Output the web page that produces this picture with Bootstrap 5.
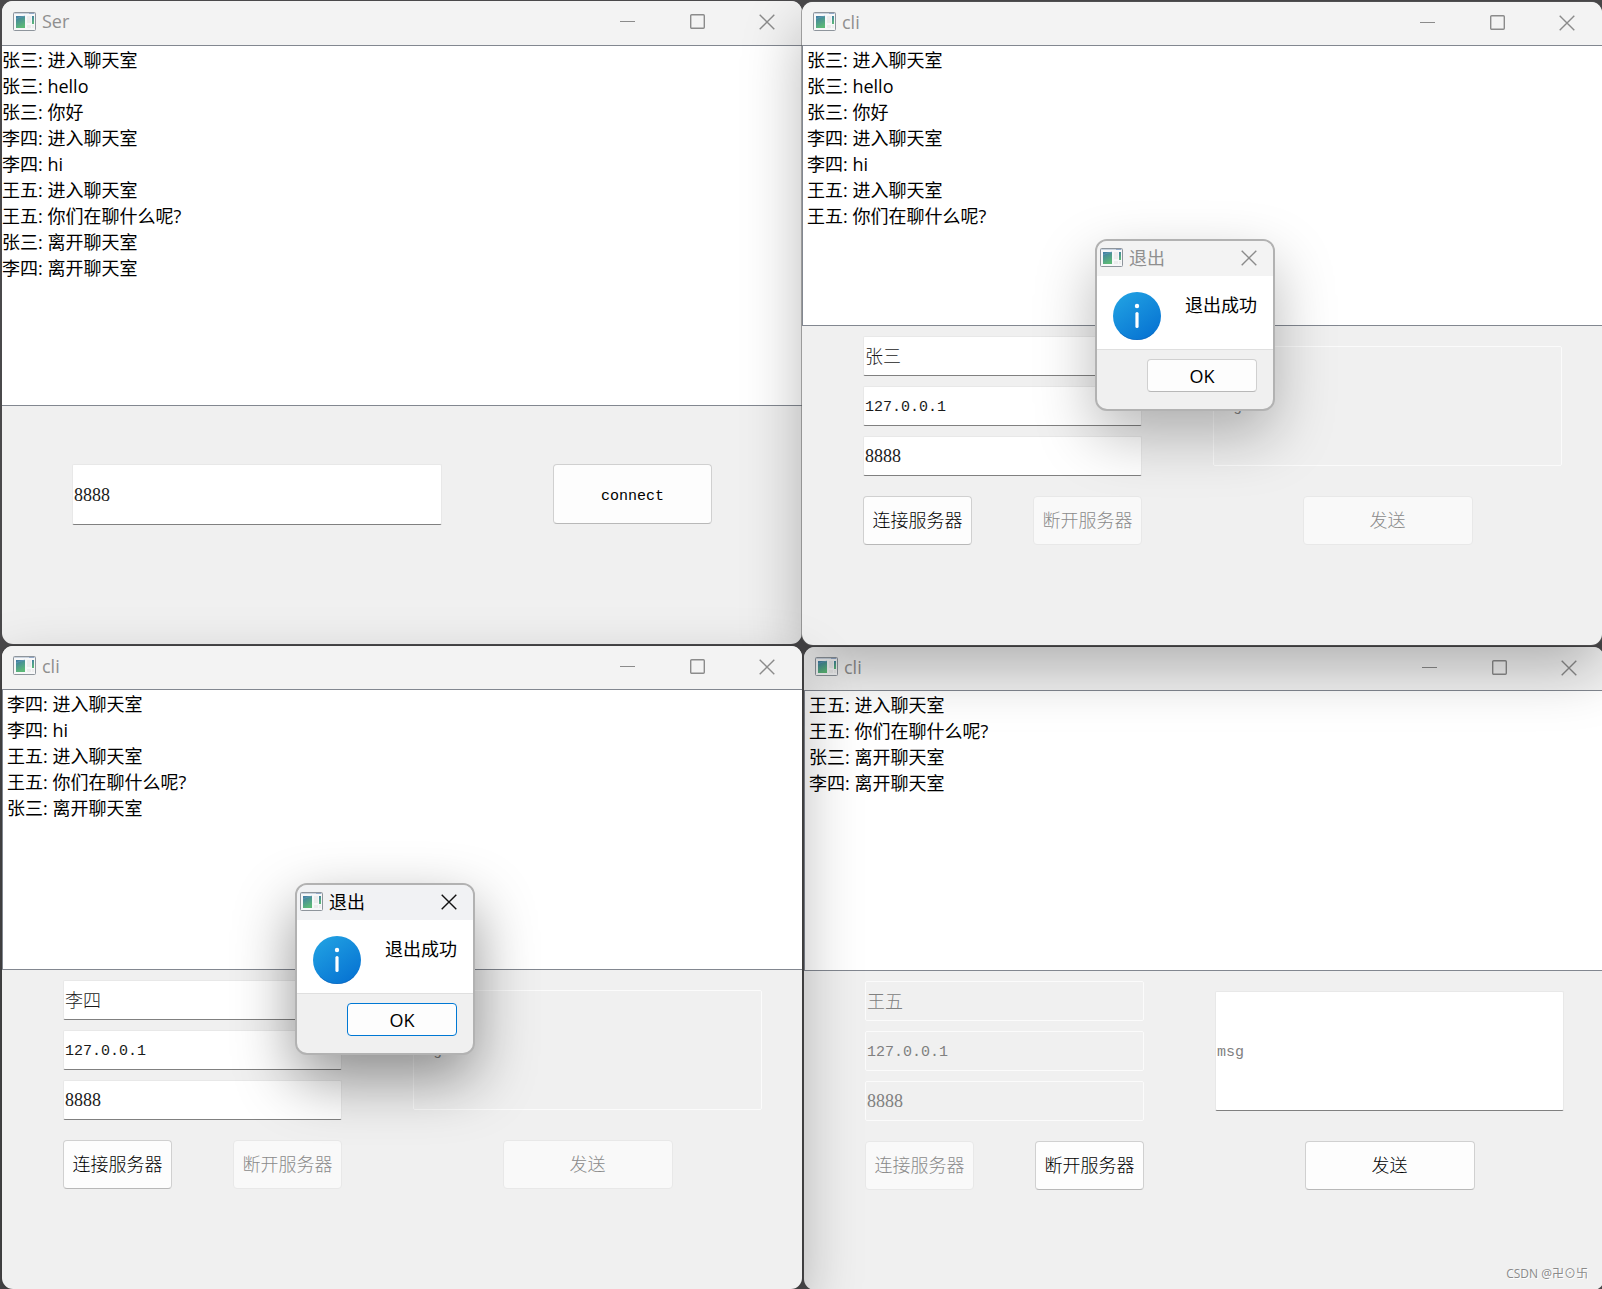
<!DOCTYPE html>
<html lang="zh-CN">
<head>
<meta charset="utf-8">
<meta name="viewport" content="width=device-width, initial-scale=1">
<title>Ser / cli</title>
<link href="https://cdn.jsdelivr.net/npm/bootstrap@5.3.0/dist/css/bootstrap.min.css" rel="stylesheet">
<style>
  body {
    background: #4a494b;
    color: #000;
    font-family: "Open Sans", "Noto Sans CJK SC", sans-serif;
    font-size: 18px;
    line-height: 26px;
  }
  .desktop {
    display: grid;
    grid-template-columns: 1fr 1fr;
    grid-template-rows: 1fr 1fr;
    row-gap: 2px;
    min-height: 100vh;
    padding: 1px 0 0 2px;
    overflow: hidden;
  }
  .win {
    position: relative;
    display: flex;
    flex-direction: column;
    background: #f0f0f0;
    border-radius: 11px;
  }
  .win-server { z-index: 2; }
  .win-first { z-index: 3; margin: 1px 0 -1px; box-shadow: 0 0 0 1px rgba(90, 90, 90, .5), 0 24px 60px rgba(0, 0, 0, .28); }
  .win-second { z-index: 4; box-shadow: 0 0 0 1px rgba(60, 60, 60, .6), 0 24px 60px rgba(0, 0, 0, .28); }
  .win-third { z-index: 1; margin: 1px -2px -1px 2px; }

  .titlebar { height: 43px; padding-left: 11px; background: #f3f3f3; color: #8f8f8f; border-radius: 11px 11px 0 0; }
  .win-server .titlebar { height: 44px; }
  .title-label { gap: 6px; }
  .caption-btn { width: 70px; height: 41px; border: 0; padding: 0; background: transparent; color: #8b8b8b; display: flex; align-items: center; justify-content: center; }

  .chat-log { flex: 1 0 280px; border: 1px solid #828790; border-right: 0; background: #fff; padding: 1px 4px 0; }
  .win-server .chat-log { border-left: 0; padding-left: 0; }

  .server-panel { padding: 58px 90px 119px 70px; gap: 111px; }
  .server-panel .field { flex: 7 1 0; height: 61px; }
  .server-panel .push { flex: 3 1 0; height: 60px; }

  .client-panel { display: grid; grid-template-columns: 4fr 5fr; column-gap: 71px; padding: 10px 40px 100px 61px; }
  .client-panel .field { height: 40px; }
  .client-panel .field-msg { height: 120px; }
  .client-panel .push { height: 49px; }
  .login-column { gap: 10px; }
  .send-column { padding-top: 10px; }
  .push-pair { display: flex; justify-content: space-between; margin-top: 10px; }
  .push-pair .push { width: 109px; }
  .push-send { width: 170px; }

  .field {
    width: 100%;
    min-width: 0;
    border: 1px solid #e8e8e8;
    border-bottom-color: #808080;
    border-radius: 2px;
    background: #fff;
    color: #1a1a1a;
    padding: 3px 1px 0;
    font-family: "Liberation Mono", "Noto Sans CJK SC", monospace;
    font-size: 15px;
  }
  .field-name { font-size: 18px; font-weight: 300; padding: 0 1px 3px; }
  .field-port { font-family: "Liberation Serif", serif; font-size: 18px; padding-top: 1px; }
  .field::placeholder { color: #808080; opacity: 1; }
  .field:disabled { background: transparent; border-color: #fbfbfb; color: #808080; }
  .push {
    border: 1px solid #d0d0d0;
    border-bottom-color: #b8b8b8;
    border-radius: 4px;
    background: #fdfdfd;
    color: #000;
    padding: 3px 0 0;
    font-family: "Liberation Mono", "Noto Sans CJK SC", monospace;
    font-size: 18px;
    font-weight: 300;
    white-space: nowrap;
  }
  .push-latin { font-size: 15px; font-weight: 400; padding-top: 5px; }
  .push:disabled { background: #f9f9f9; border-color: #e8e8e8; color: #8a8a8a; }

  .msgbox {
    position: absolute;
    z-index: 5;
    top: 237px;
    left: calc(50% - 107px);
    width: 180px;
    border: 2px solid #b2b2b2;
    border-radius: 12px;
    background: #f0f0f0;
    box-shadow: 0 24px 60px rgba(0, 0, 0, .28);
  }
  .msgbox-active { box-shadow: 0 24px 60px rgba(0, 0, 0, .42); }
  .msgbox-title { height: 35px; padding: 0 0 2px 3px; background: #f3f3f3; color: #8f8f8f; border-radius: 10px 10px 0 0; }
  .msgbox-title .title-label { margin-right: auto; }
  .msgbox-title .caption-btn { width: 48px; height: 33px; }
  .msgbox-active .msgbox-title { background: #f1f2f4; color: #000; }
  .msgbox-active .caption-btn { color: #111; }
  .msgbox-body { height: 74px; padding: 16px 16px 0; background: #fff; border-bottom: 1px solid #dfdfdf; }
  .msgbox-foot { padding: 9px 16px 17px; }
  .msgbox-foot .push { width: 110px; height: 33px; padding: 0; font-family: "Open Sans", sans-serif; font-weight: 400; line-height: 24px; }
  .msgbox-active .push { border-color: #0078d4; }

  .watermark { position: absolute; z-index: 6; right: 16px; bottom: 4px; color: #8a8a8a; font-size: 12px; line-height: 24px; text-shadow: 1px 1px 0 #fff; }
</style>
<script src="https://cdn.jsdelivr.net/npm/bootstrap@5.3.0/dist/js/bootstrap.bundle.min.js"></script>
</head>
<body>

<svg width="0" height="0" class="position-absolute" aria-hidden="true">
  <defs>
    <linearGradient id="paneFill" x1="0" y1="0" x2=".4" y2="1">
      <stop offset="0" stop-color="#3f7ba6"/><stop offset="1" stop-color="#5cb878"/>
    </linearGradient>
    <linearGradient id="infoFill" x1=".1" y1="0" x2=".8" y2="1">
      <stop offset="0" stop-color="#22a3e3"/><stop offset="1" stop-color="#0672d2"/>
    </linearGradient>
  </defs>
  <symbol id="appIcon" viewBox="0 0 23 19">
    <rect x=".5" y=".5" width="22" height="18" rx="1" fill="#f7f8f9" stroke="#8e959c"/>
    <path d="M1 1.500h21" stroke="#c9d3df"/>
    <path d="M16 1.500h5" stroke="#93a9c8"/>
    <rect x="3" y="4" width="9" height="12" fill="url(#paneFill)"/>
    <path d="M3 7c3-2 6-2 9-3" stroke="#6d9bc4" fill="none" opacity=".6"/>
    <rect x="14" y="4" width="4" height="7" fill="#ececed"/>
    <rect x="14" y="13" width="4" height="3" fill="#ececed"/>
    <rect x="19" y="4" width="2" height="8" fill="url(#paneFill)"/>
    <rect x="19" y="13" width="2" height="3" fill="#eeeeee"/>
  </symbol>
  <symbol id="minIcon" viewBox="0 0 15 15"><path d="M0 7.500h15" stroke="currentColor" fill="none"/></symbol>
  <symbol id="maxIcon" viewBox="0 0 15 15"><rect x=".7" y=".7" width="13.600" height="13.600" rx="1" stroke="currentColor" stroke-width="1.400" fill="none"/></symbol>
  <symbol id="closeIcon" viewBox="0 0 16 16"><path d="M.7.7l14.600 14.600M15.300.7L.7 15.300" stroke="currentColor" stroke-width="1.400" fill="none"/></symbol>
  <symbol id="infoIcon" viewBox="0 0 48 48">
    <circle cx="24" cy="24" r="24" fill="url(#infoFill)"/>
    <path d="M7 40.500A23.500 23.500 0 0 0 41 40.500" stroke="#075fb8" fill="none" opacity=".6"/>
    <circle cx="24" cy="14" r="2.200" fill="#fff"/>
    <path d="M24 21.500v13" stroke="#fff" stroke-width="3.200" stroke-linecap="round"/>
  </symbol>
</svg>

<main class="desktop">

  <section class="win win-server">
    <header class="titlebar d-flex">
      <div class="title-label d-flex align-items-center me-auto pb-1">
        <svg width="23" height="19"><use href="#appIcon"/></svg><span>Ser</span>
      </div>
      <button class="caption-btn" type="button" aria-label="最小化"><svg width="15" height="15"><use href="#minIcon"/></svg></button>
      <button class="caption-btn" type="button" aria-label="最大化"><svg width="15" height="15"><use href="#maxIcon"/></svg></button>
      <button class="caption-btn" type="button" aria-label="关闭"><svg width="16" height="16"><use href="#closeIcon"/></svg></button>
    </header>
    <div class="chat-log">
      <div>张三: 进入聊天室</div>
      <div>张三: hello</div>
      <div>张三: 你好</div>
      <div>李四: 进入聊天室</div>
      <div>李四: hi</div>
      <div>王五: 进入聊天室</div>
      <div>王五: 你们在聊什么呢?</div>
      <div>张三: 离开聊天室</div>
      <div>李四: 离开聊天室</div>
    </div>
    <form class="server-panel d-flex">
      <input class="field field-port" type="text" value="8888" aria-label="端口">
      <button class="push push-latin" type="button">connect</button>
    </form>
  </section>

  <section class="win win-first">
    <header class="titlebar d-flex">
      <div class="title-label d-flex align-items-center me-auto pb-1">
        <svg width="23" height="19"><use href="#appIcon"/></svg><span>cli</span>
      </div>
      <button class="caption-btn" type="button" aria-label="最小化"><svg width="15" height="15"><use href="#minIcon"/></svg></button>
      <button class="caption-btn" type="button" aria-label="最大化"><svg width="15" height="15"><use href="#maxIcon"/></svg></button>
      <button class="caption-btn" type="button" aria-label="关闭"><svg width="16" height="16"><use href="#closeIcon"/></svg></button>
    </header>
    <div class="chat-log">
      <div>张三: 进入聊天室</div>
      <div>张三: hello</div>
      <div>张三: 你好</div>
      <div>李四: 进入聊天室</div>
      <div>李四: hi</div>
      <div>王五: 进入聊天室</div>
      <div>王五: 你们在聊什么呢?</div>
    </div>
    <form class="client-panel">
      <div class="login-column d-grid align-content-start">
        <input class="field field-name" type="text" value="张三" aria-label="昵称">
        <input class="field" type="text" value="127.0.0.1" aria-label="地址">
        <input class="field field-port" type="text" value="8888" aria-label="端口">
        <div class="push-pair">
          <button class="push" type="button">连接服务器</button>
          <button class="push" type="button" disabled>断开服务器</button>
        </div>
      </div>
      <div class="send-column d-flex flex-column align-items-center justify-content-between">
        <input class="field field-msg" type="text" placeholder="msg" aria-label="消息" disabled>
        <button class="push push-send" type="button" disabled>发送</button>
      </div>
    </form>
    <div class="msgbox" role="dialog" aria-label="退出">
      <div class="msgbox-title d-flex align-items-center">
        <div class="title-label d-flex align-items-center">
          <svg width="23" height="19"><use href="#appIcon"/></svg><span>退出</span>
        </div>
        <button class="caption-btn" type="button" aria-label="关闭"><svg width="16" height="16"><use href="#closeIcon"/></svg></button>
      </div>
      <div class="msgbox-body d-flex justify-content-between">
        <svg width="48" height="48"><use href="#infoIcon"/></svg><span>退出成功</span>
      </div>
      <div class="msgbox-foot d-flex justify-content-end"><button class="push" type="button">OK</button></div>
    </div>
  </section>

  <section class="win win-second">
    <header class="titlebar d-flex">
      <div class="title-label d-flex align-items-center me-auto pb-1">
        <svg width="23" height="19"><use href="#appIcon"/></svg><span>cli</span>
      </div>
      <button class="caption-btn" type="button" aria-label="最小化"><svg width="15" height="15"><use href="#minIcon"/></svg></button>
      <button class="caption-btn" type="button" aria-label="最大化"><svg width="15" height="15"><use href="#maxIcon"/></svg></button>
      <button class="caption-btn" type="button" aria-label="关闭"><svg width="16" height="16"><use href="#closeIcon"/></svg></button>
    </header>
    <div class="chat-log">
      <div>李四: 进入聊天室</div>
      <div>李四: hi</div>
      <div>王五: 进入聊天室</div>
      <div>王五: 你们在聊什么呢?</div>
      <div>张三: 离开聊天室</div>
    </div>
    <form class="client-panel">
      <div class="login-column d-grid align-content-start">
        <input class="field field-name" type="text" value="李四" aria-label="昵称">
        <input class="field" type="text" value="127.0.0.1" aria-label="地址">
        <input class="field field-port" type="text" value="8888" aria-label="端口">
        <div class="push-pair">
          <button class="push" type="button">连接服务器</button>
          <button class="push" type="button" disabled>断开服务器</button>
        </div>
      </div>
      <div class="send-column d-flex flex-column align-items-center justify-content-between">
        <input class="field field-msg" type="text" placeholder="msg" aria-label="消息" disabled>
        <button class="push push-send" type="button" disabled>发送</button>
      </div>
    </form>
    <div class="msgbox msgbox-active" role="dialog" aria-label="退出">
      <div class="msgbox-title d-flex align-items-center">
        <div class="title-label d-flex align-items-center">
          <svg width="23" height="19"><use href="#appIcon"/></svg><span>退出</span>
        </div>
        <button class="caption-btn" type="button" aria-label="关闭"><svg width="16" height="16"><use href="#closeIcon"/></svg></button>
      </div>
      <div class="msgbox-body d-flex justify-content-between">
        <svg width="48" height="48"><use href="#infoIcon"/></svg><span>退出成功</span>
      </div>
      <div class="msgbox-foot d-flex justify-content-end"><button class="push" type="button">OK</button></div>
    </div>
  </section>

  <section class="win win-third">
    <header class="titlebar d-flex">
      <div class="title-label d-flex align-items-center me-auto pb-1">
        <svg width="23" height="19"><use href="#appIcon"/></svg><span>cli</span>
      </div>
      <button class="caption-btn" type="button" aria-label="最小化"><svg width="15" height="15"><use href="#minIcon"/></svg></button>
      <button class="caption-btn" type="button" aria-label="最大化"><svg width="15" height="15"><use href="#maxIcon"/></svg></button>
      <button class="caption-btn" type="button" aria-label="关闭"><svg width="16" height="16"><use href="#closeIcon"/></svg></button>
    </header>
    <div class="chat-log">
      <div>王五: 进入聊天室</div>
      <div>王五: 你们在聊什么呢?</div>
      <div>张三: 离开聊天室</div>
      <div>李四: 离开聊天室</div>
    </div>
    <form class="client-panel">
      <div class="login-column d-grid align-content-start">
        <input class="field field-name" type="text" value="王五" aria-label="昵称" disabled>
        <input class="field" type="text" value="127.0.0.1" aria-label="地址" disabled>
        <input class="field field-port" type="text" value="8888" aria-label="端口" disabled>
        <div class="push-pair">
          <button class="push" type="button" disabled>连接服务器</button>
          <button class="push" type="button">断开服务器</button>
        </div>
      </div>
      <div class="send-column d-flex flex-column align-items-center justify-content-between">
        <input class="field field-msg" type="text" placeholder="msg" aria-label="消息">
        <button class="push push-send" type="button">发送</button>
      </div>
    </form>
    <div class="watermark">CSDN @卍⊙卐</div>
  </section>

</main>
</body>
</html>
